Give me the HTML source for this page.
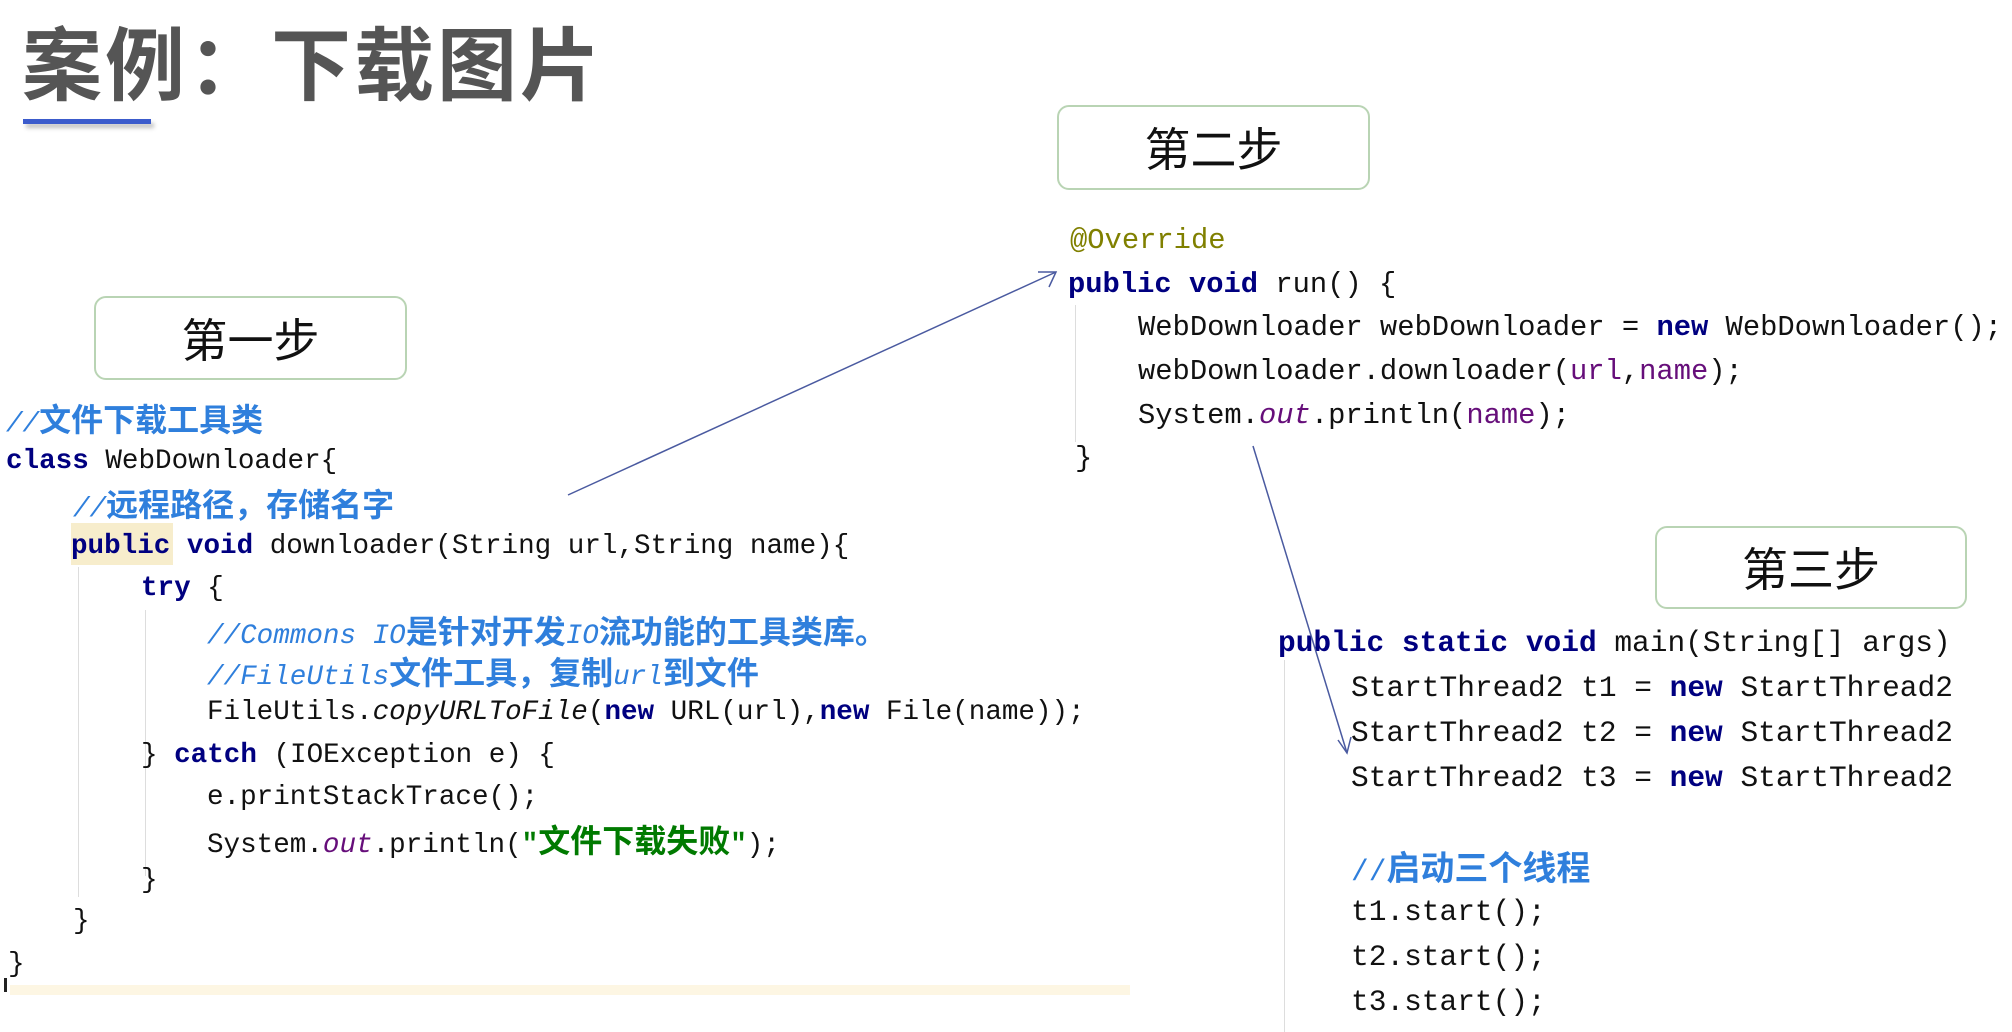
<!DOCTYPE html>
<html><head><meta charset="utf-8"><style>
html,body{margin:0;padding:0;background:#fff;width:2012px;height:1032px;overflow:hidden;position:relative}
.t{position:absolute;left:22px;top:10px;font:bold 80px "Noto Sans CJK SC",sans-serif;color:#555;letter-spacing:3px;line-height:100px}
.ul{position:absolute;left:23px;top:119px;width:128px;height:5px;background:#3b5bcc;box-shadow:3px 4px 4px rgba(0,0,0,.25)}
.box{position:absolute;border:2px solid #b9d4b4;border-radius:12px;background:#fff;font:46px "Noto Sans CJK SC",sans-serif;color:#111;text-align:center;box-sizing:border-box}
.l{position:absolute;white-space:pre;font-family:"Liberation Mono","Noto Sans CJK SC",monospace;color:#111;height:42px;line-height:42px}
.a{font-size:27.6px}
.b{font-size:28.8px}
.c{font-size:29.5px}
.k{color:#000080;font-weight:bold}
.cm{color:#2f7fdc;font-style:italic}
.cj{color:#2f7fdc;font-family:"Noto Sans CJK SC",sans-serif;font-weight:bold;font-style:normal;font-size:32px}
.s{color:#007a00;font-weight:bold}
.s2{color:#007a00;font-weight:bold;font-family:"Noto Sans CJK SC",sans-serif;font-size:32px}
.p{color:#660e7a;font-style:italic}
.v{color:#660e7a}
.an{color:#808000}
.g{position:absolute;width:1px;background:#ddd}
</style></head><body>
<div class="t">案例：下载图片</div>
<div class="ul"></div>
<div class="box" style="left:94px;top:296px;width:313px;height:84px;line-height:80px">第一步</div>
<div class="box" style="left:1057px;top:105px;width:313px;height:85px;line-height:81px">第二步</div>
<div class="box" style="left:1655px;top:526px;width:312px;height:83px;line-height:79px">第三步</div>

<div style="position:absolute;left:71px;top:523px;width:102px;height:42px;background:#f7edcc"></div>
<div style="position:absolute;left:10px;top:985px;width:1120px;height:10px;background:#fdf6e3"></div>
<div style="position:absolute;left:4px;top:978px;width:3px;height:14px;background:#222"></div>

<div class="g" style="left:78px;top:567px;height:330px"></div>
<div class="g" style="left:145px;top:610px;height:170px"></div>
<div class="g" style="left:145px;top:776px;height:100px"></div>
<div class="g" style="left:1075px;top:305px;height:137px"></div>
<div class="g" style="left:1284px;top:660px;height:372px"></div>

<div class="l a" style="left:6px;top:397px"><span class="cm">//</span><span class="cj">文件下载工具类</span></div>
<div class="l a" style="left:6px;top:441px"><span class="k">class</span> WebDownloader{</div>
<div class="l a" style="left:73px;top:482px"><span class="cm">//</span><span class="cj">远程路径，存储名字</span></div>
<div class="l a" style="left:71px;top:526px"><span class="k">public void</span> downloader(String url,String name){</div>
<div class="l a" style="left:141px;top:568px"><span class="k">try</span> {</div>
<div class="l a" style="left:207px;top:609px"><span class="cm">//Commons IO</span><span class="cj">是针对开发</span><span class="cm">IO</span><span class="cj">流功能的工具类库。</span></div>
<div class="l a" style="left:207px;top:650px"><span class="cm">//FileUtils</span><span class="cj">文件工具，复制</span><span class="cm">url</span><span class="cj">到文件</span></div>
<div class="l a" style="left:207px;top:692px">FileUtils.<i>copyURLToFile</i>(<span class="k">new</span> URL(url),<span class="k">new</span> File(name));</div>
<div class="l a" style="left:141px;top:735px">} <span class="k">catch</span> (IOException e) {</div>
<div class="l a" style="left:207px;top:777px">e.printStackTrace();</div>
<div class="l a" style="left:207px;top:818px">System.<span class="p">out</span>.println(<span class="s">"</span><span class="s2">文件下载失败</span><span class="s">"</span>);</div>
<div class="l a" style="left:141px;top:860px">}</div>
<div class="l a" style="left:73px;top:901px">}</div>
<div class="l a" style="left:8px;top:944px">}</div>

<div class="l b" style="left:1070px;top:220px"><span class="an">@Override</span></div>
<div class="l b" style="left:1068px;top:264px"><span class="k">public void</span> run() {</div>
<div class="l b" style="left:1138px;top:307px">WebDownloader webDownloader = <span class="k">new</span> WebDownloader();</div>
<div class="l b" style="left:1138px;top:351px">webDownloader.downloader(<span class="v">url</span>,<span class="v">name</span>);</div>
<div class="l b" style="left:1138px;top:395px">System.<span class="p">out</span>.println(<span class="v">name</span>);</div>
<div class="l b" style="left:1075px;top:438px">}</div>

<div class="l c" style="left:1278px;top:622px"><span class="k">public static void</span> main(String[] args)</div>
<div class="l c" style="left:1351px;top:667px">StartThread2 t1 = <span class="k">new</span> StartThread2</div>
<div class="l c" style="left:1351px;top:712px">StartThread2 t2 = <span class="k">new</span> StartThread2</div>
<div class="l c" style="left:1351px;top:757px">StartThread2 t3 = <span class="k">new</span> StartThread2</div>
<div class="l c" style="left:1351px;top:845px"><span class="cm" style="font-style:normal">//</span><span class="cj" style="font-size:34px">启动三个线程</span></div>
<div class="l c" style="left:1351px;top:891px">t1.start();</div>
<div class="l c" style="left:1351px;top:936px">t2.start();</div>
<div class="l c" style="left:1351px;top:981px">t3.start();</div>

<svg style="position:absolute;left:0;top:0" width="2012" height="1032">
<g stroke="#4a5aa0" stroke-width="1.5" fill="none">
<line x1="568" y1="495" x2="1056" y2="272"/>
<polyline points="1038,272 1056,272 1049,287"/>
<line x1="1253" y1="446" x2="1347" y2="753"/>
<polyline points="1338,740 1347,753 1351,737"/>
</g></svg>
</body></html>
